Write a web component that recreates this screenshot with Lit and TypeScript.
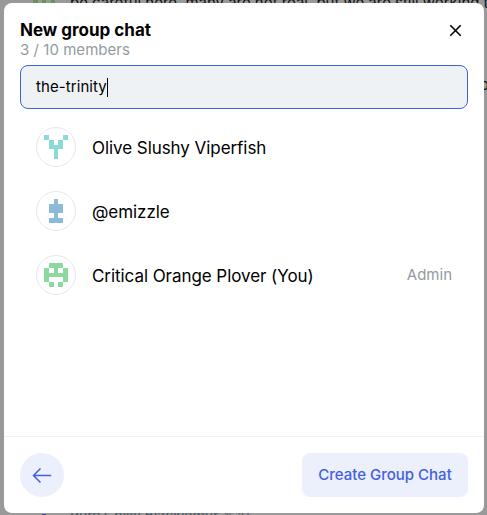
import { LitElement, html, css, svg } from "lit";
import { customElement, property } from "lit/decorators.js";

@customElement("identicon-avatar")
class IdenticonAvatar extends LitElement {
  @property() color = "";
  @property({ type: Array }) rows: string[] = [];
  static styles = css`
    :host { box-sizing: border-box; width: 40px; height: 40px; flex: none; border: 1px solid #e7e7e7; border-radius: 50%; display: flex; align-items: center; justify-content: center; }
    svg { display: block; }
  `;
  render() {
    return html`<svg width="24" height="24" viewBox="0 0 5 5" fill=${this.color} shape-rendering="crispEdges">
      ${this.rows.flatMap((r, y) => [...r].map((c, x) => c === "#" ? svg`<rect x=${x} y=${y} width="1" height="1"/>` : null))}
    </svg>`;
  }
}

const members = [
  { name: "Olive Slushy Viperfish", role: "", color: "#8cd9d5", rows: ["#...#", ".#.#.", ".###.", "..#..", "..#.."] },
  { name: "@emizzle", role: "", color: "#8cbad9", rows: ["..#..", ".###.", ".###.", "..#..", ".###."] },
  { name: "Critical Orange Plover (You)", role: "Admin", color: "#8cd9a0", rows: [".###.", "#.#.#", "#####", "#...#", ".#.#."] },
];

@customElement("app-root")
class AppRoot extends LitElement {
  static styles = css`
    :host { display: block; position: relative; width: 487px; height: 515px; overflow: hidden; background: #999; font-family: Inter, sans-serif; color: #000; }
    * { box-sizing: border-box; }
    .behind { position: absolute; white-space: nowrap; font-size: 15px; line-height: 22px; color: #111; }
    .line { left: 70px; top: -8px; letter-spacing: -0.03px; }
    .side { left: 480px; top: 74px; }
    .name { left: 70px; top: 504px; font-size: 14px; font-weight: 500; color: #555b66; letter-spacing: -0.08px; }
    .time { margin-left: 6px; font-size: 10px; }
    .pixels { position: absolute; left: 32px; top: 0; }
    .dot { position: absolute; left: 42px; top: 514px; width: 4px; height: 4px; background: #45468c; }
    .modal { position: absolute; left: 4px; top: 3px; width: 480px; height: 510px; border-radius: 8px; background: #fff; display: flex; flex-direction: column; }
    header { display: flex; justify-content: space-between; padding: 16px 16px 0; height: 62px; }
    h1 { margin: 0; font-size: 17px; line-height: 22px; font-weight: 700; }
    .count { font-size: 15px; line-height: 18px; color: #939ba1; letter-spacing: 0.04px; }
    .close { margin: 5px 6px 0 0; }
    .field { margin: 0 16px; height: 44px; flex: none; border: 1px solid #4360df; border-radius: 8px; background: #eef2f5; padding: 0 15px; display: flex; align-items: center; font-size: 15px; line-height: 22px; letter-spacing: 0.08px; }
    .caret { width: 1px; height: 19px; background: #000; }
    .list { flex: 1; padding: 6px 16px 0; }
    .row { height: 64px; padding: 0 16px; display: flex; align-items: center; gap: 16px; }
    .member { flex: 1; font-size: 17px; line-height: 22px; padding-top: 1px; letter-spacing: -0.06px; }
    .role { font-size: 15px; color: #939ba1; padding-bottom: 2px; }
    footer { height: 77px; flex: none; border-top: 1px solid #eef0f2; padding: 0 16px; display: flex; align-items: center; justify-content: space-between; }
    button { height: 44px; border: 0; padding: 0; background: #eceffc; color: #4360df; font: 500 15px/22px Inter, sans-serif; }
    .back { width: 44px; border-radius: 50%; display: flex; align-items: center; justify-content: center; }
    .create { width: 166px; border-radius: 8px; }
  `;
  render() {
    return html`
      <svg class="pixels" width="26" height="8" fill="#68935a"><path d="M1 0h5v3H1zM10 0h4v3h-4zM19 0h4v3h-4z"/></svg>
      <div class="behind line">be careful here, many are not real, but we are still working t</div>
      <div class="behind side">o</div>
      <div class="dot"></div>
      <div class="behind name">Pure Chilly Blacklemur<span class="time">15:27</span></div>
      <div class="modal">
        <header>
          <div><h1>New group chat</h1><div class="count">3 / 10 members</div></div>
          <svg class="close" width="13" height="13" viewBox="0 0 13 13" fill="none" stroke="#000" stroke-width="1.6"><path d="M1.3 1.3 11.7 11.7M11.7 1.3 1.3 11.7"/></svg>
        </header>
        <div class="field"><span>the-trinity</span><span class="caret"></span></div>
        <div class="list">
          ${members.map(m => html`<div class="row">
            <identicon-avatar .color=${m.color} .rows=${m.rows}></identicon-avatar>
            <span class="member">${m.name}</span><span class="role">${m.role}</span>
          </div>`)}
        </div>
        <footer>
          <button class="back" aria-label="Back"><svg width="20" height="16" viewBox="0 0 20 16" fill="none" stroke="#4360df" stroke-width="1.5"><path d="M1.5 8.5H19.2M8.5 1.5 1.5 8.5 8.5 15.5"/></svg></button>
          <button class="create">Create Group Chat</button>
        </footer>
      </div>`;
  }
}
